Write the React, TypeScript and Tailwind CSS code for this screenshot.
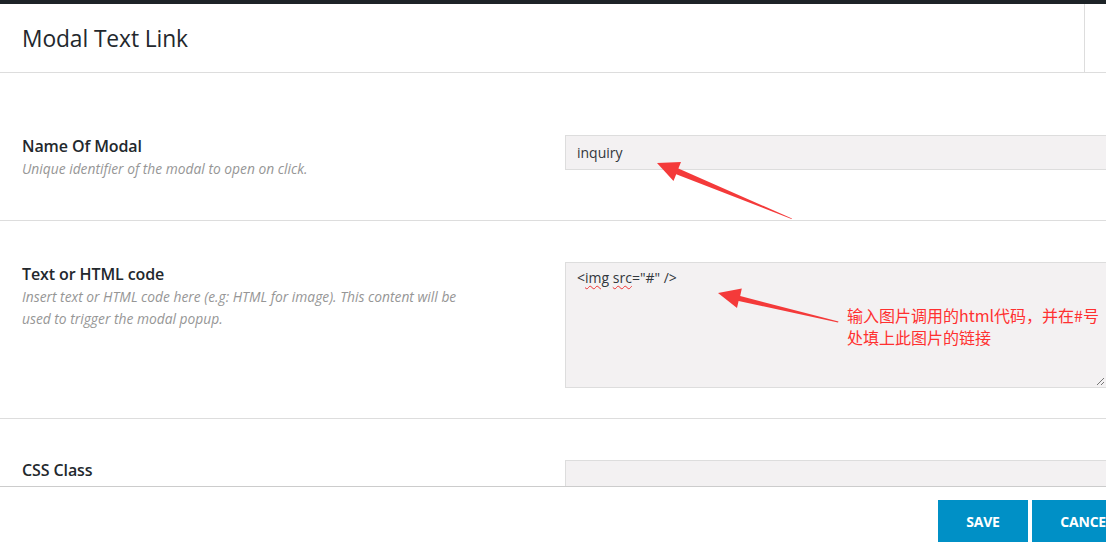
import React from "react";

const FONT = "font-['Open_Sans','Noto_Sans',Arial,sans-serif]";

function Arrow({ points }: { points: string }) {
  return <polygon points={points} fill="#f43a3a" />;
}

function Row({
  label,
  desc,
  className,
  children,
}: {
  label: string;
  desc?: React.ReactNode;
  className: string;
  children: React.ReactNode;
}) {
  return (
    <div className={`flex border-b border-[#dddddd] pl-[22px] ${className}`}>
      <div className="w-[543px] shrink-0 pr-[60px]">
        <div className="text-[16px] leading-[24px] font-semibold text-[#23282d] tracking-[-0.1px]">{label}</div>
        {desc && (
          <div className="text-[13.8px] leading-[22px] italic text-[#969696]">{desc}</div>
        )}
      </div>
      {children}
    </div>
  );
}

export default function App() {
  return (
    <div className={`relative w-[1106px] h-[542px] overflow-hidden bg-white ${FONT}`}>
      <div className="flex flex-col h-full">
        {/* top bar */}
        <div className="h-[4px] bg-[#1d2327] shrink-0" />

        {/* header */}
        <div className="flex h-[69px] shrink-0 border-b border-[#dddddd]">
          <h1 className="flex-1 pl-[22px] pt-[20px] text-[22.8px] leading-[30px] font-medium text-[#23282d] tracking-[-0.1px]">
            Modal Text Link
          </h1>
          <div className="w-[22px] border-l border-[#dddddd]" />
        </div>

        {/* body */}
        <div className="flex-1 overflow-hidden">
          <Row
            label="Name Of Modal"
            desc="Unique identifier of the modal to open on click."
            className="h-[148px] pt-[61px]"
          >
            <div className="w-[560px] h-[35px] shrink-0 mt-[1px] border border-[#dddddd] bg-[#f3f1f2] pl-[11px] text-[14px] leading-[33px] text-[#32373c]">
              inquiry
            </div>
          </Row>

          <Row
            label="Text or HTML code"
            desc={
              <>
                Insert text or HTML code here (e.g: HTML for image). This content will be
                <br />
                used to trigger the modal popup.
              </>
            }
            className="h-[198px] pt-[41px]"
          >
            <div className="relative w-[542px] h-[126px] shrink-0 border border-[#dddddd] bg-[#f3f1f2] pl-[11px] pt-[4px] text-[14px] leading-[22px] text-[#32373c]">
              &lt;
              <span className="underline decoration-wavy decoration-[#e33] decoration-1 underline-offset-2">img</span>{" "}
              <span className="underline decoration-wavy decoration-[#e33] decoration-1 underline-offset-2">src</span>
              ="#" /&gt;
              <svg className="absolute right-[1px] bottom-[1px]" width="9" height="9" viewBox="0 0 9 9">
                <path d="M8 1 L1 8 M8 5 L5 8" stroke="#777" strokeWidth="1" fill="none" />
              </svg>
            </div>
          </Row>

          <Row label="CSS Class" className="h-[120px] pt-[39px]">
            <div className="w-[560px] h-[35px] shrink-0 mt-[2px] border border-[#dddddd] bg-[#f3f1f2]" />
          </Row>
        </div>

        {/* footer */}
        <div className="h-[56px] shrink-0 border-t border-[#cccccc] flex justify-end gap-[4px] pt-[13px] -mr-[36px]">
          <button className="w-[90px] h-[42px] bg-[#0090c6] text-white text-[14px] font-bold tracking-[-0.2px]">SAVE</button>
          <button className="w-[110px] h-[42px] bg-[#0090c6] text-white text-[14px] font-bold tracking-[-0.2px]">CANCEL</button>
        </div>
      </div>

      {/* annotations */}
      <svg className="absolute inset-0 pointer-events-none" width="1106" height="542">
        <Arrow points="657,163 681,162 678.4,168.6 792,218.5 791.5,219 676.2,174.2 673.5,181" />
        <Arrow points="718,293 741.8,288.5 740.2,296 838.5,321.5 838,322.5 738.6,301 737,308" />
      </svg>
      <div className="absolute left-[847px] top-[304px] text-[16px] leading-[22px] text-[#ff3030] font-['Noto_Sans_CJK_SC',sans-serif] whitespace-nowrap">
        输入图片调用的html代码，并在#号
        <br />
        处填上此图片的链接
      </div>
    </div>
  );
}
